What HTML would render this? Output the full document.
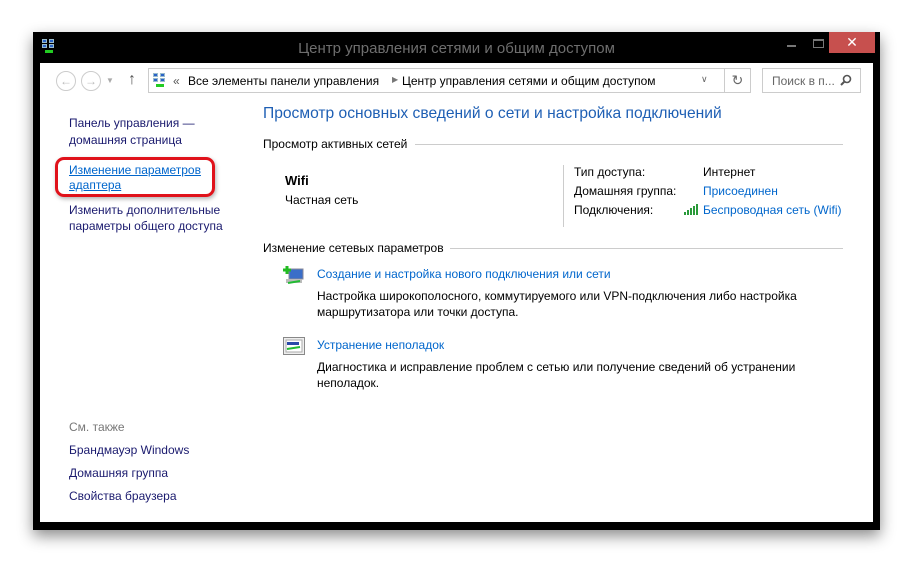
<!DOCTYPE html>
<html><head><meta charset="utf-8"><style>
*{margin:0;padding:0;box-sizing:border-box}
body{width:913px;height:563px;background:#fff;position:relative;overflow:hidden;font-family:"Liberation Sans","DejaVu Sans",sans-serif;font-size:12px;color:#000}
.win{position:absolute;left:33px;top:32px;width:847px;height:498px;background:#000;box-shadow:0 6px 14px rgba(0,0,0,.45)}
.title{position:absolute;left:0;right:0;top:8px;text-align:center;color:#6e6e6e;font-size:15px}
.client{position:absolute;left:7px;top:31px;width:833px;height:459px;background:#fff}
.a{position:absolute;white-space:nowrap}
.link{color:#0066cc}
.hdr{color:#1e5fb4;font-size:15.6px}
.nav{color:#1a1a6e}
.line{position:absolute;height:1px;background:#ccc}
.box{position:absolute;border:1px solid #ccc;background:#fff}
.netico{position:absolute;width:14px;height:14px}
.netico i{position:absolute;width:5px;height:4px;background:#2a63c8;border:1px solid #9bc}
</style></head><body>
<div class="win">
  <div class="netico" style="left:9px;top:7px">
    <i style="left:0;top:0"></i><i style="left:7px;top:0"></i><i style="left:0;top:5px"></i><i style="left:7px;top:5px"></i>
    <div style="position:absolute;left:3px;top:11px;width:8px;height:3px;background:#2c2"></div>
  </div>
  <div class="title">Центр управления сетями и общим доступом</div>
  <div class="a" style="left:754px;top:13px;width:9px;height:2px;background:#777"></div>
  <div class="a" style="left:780px;top:7px;width:11px;height:9px;border:1px solid #777;border-top-width:2px"></div>
  <div class="a" style="left:796px;top:0;width:46px;height:21px;background:#c7504e;color:#fff;text-align:center;font-size:14px;line-height:21px;font-weight:bold">✕</div>
  <div class="client">
    <div class="a" style="left:16px;top:8px;width:20px;height:20px;border:1px solid #ccc;border-radius:50%;color:#bbb;text-align:center;line-height:18px">←</div>
    <div class="a" style="left:41px;top:8px;width:20px;height:20px;border:1px solid #ccc;border-radius:50%;color:#bbb;text-align:center;line-height:18px">→</div>
    <div class="a" style="left:66px;top:13px;color:#aaa;font-size:8px">▼</div>
    <div class="a" style="left:88px;top:8px;color:#555;font-size:16px;font-weight:bold">↑</div>
    <div class="box" style="left:108px;top:5px;width:603px;height:25px"></div>
    <div class="box" style="left:684px;top:5px;width:27px;height:25px;text-align:center;color:#666;font-size:14px;line-height:22px">↻</div>
    <div class="a" style="left:661px;top:11px;color:#666;font-size:9px">∨</div>
    <div class="netico" style="left:113px;top:10px">
      <i style="left:0;top:0"></i><i style="left:7px;top:0"></i><i style="left:0;top:5px"></i><i style="left:7px;top:5px"></i>
      <div style="position:absolute;left:3px;top:11px;width:8px;height:3px;background:#2c2"></div>
    </div>
    <div class="a" style="left:133px;top:11px;color:#555">«</div>
    <div class="a" style="left:148px;top:11px">Все элементы панели управления</div>
    <div class="a" style="left:352px;top:12px;color:#777;font-size:8px">▶</div>
    <div class="a" style="left:362px;top:11px">Центр управления сетями и общим доступом</div>
    <div class="box" style="left:722px;top:5px;width:99px;height:25px"></div>
    <div class="a" style="left:732px;top:11px;color:#666">Поиск в п...</div>
    <svg class="a" style="left:800px;top:11px" width="12" height="12"><circle cx="7" cy="5" r="3.5" fill="none" stroke="#555" stroke-width="1.6"/><line x1="4.5" y1="7.5" x2="1" y2="11" stroke="#555" stroke-width="2"/></svg>

    <div class="a nav" style="left:29px;top:52px;line-height:17px">Панель управления —<br>домашняя страница</div>
    <div class="a" style="left:15px;top:94px;width:160px;height:40px;border:3px solid #e0121b;border-radius:9px;box-shadow:1px 2px 4px rgba(0,0,0,.3)"></div>
    <div class="a link" style="left:29px;top:100px;line-height:15px;text-decoration:underline">Изменение параметров<br>адаптера</div>
    <div class="a nav" style="left:29px;top:139px;line-height:16px">Изменить дополнительные<br>параметры общего доступа</div>
    <div class="a" style="left:29px;top:357px;color:#777">См. также</div>
    <div class="a nav" style="left:29px;top:380px">Брандмауэр Windows</div>
    <div class="a nav" style="left:29px;top:403px">Домашняя группа</div>
    <div class="a nav" style="left:29px;top:426px">Свойства браузера</div>

    <div class="a hdr" style="left:223px;top:42px">Просмотр основных сведений о сети и настройка подключений</div>
    <div class="a" style="left:223px;top:74px">Просмотр активных сетей</div>
    <div class="line" style="left:375px;top:81px;width:428px"></div>
    <div class="a" style="left:245px;top:110px;font-weight:bold;font-size:13px">Wifi</div>
    <div class="a" style="left:245px;top:130px">Частная сеть</div>
    <div class="a" style="left:523px;top:102px;width:1px;height:62px;background:#ccc"></div>
    <div class="a" style="left:534px;top:102px">Тип доступа:</div>
    <div class="a" style="left:663px;top:102px">Интернет</div>
    <div class="a" style="left:534px;top:121px">Домашняя группа:</div>
    <div class="a link" style="left:663px;top:121px">Присоединен</div>
    <div class="a" style="left:534px;top:140px">Подключения:</div>
    <svg class="a" style="left:644px;top:140px" width="16" height="12"><g fill="#2a9a3a"><rect x="0" y="9" width="2" height="3"/><rect x="3" y="7" width="2" height="5"/><rect x="6" y="5" width="2" height="7"/><rect x="9" y="3" width="2" height="9"/><rect x="12" y="1" width="2" height="11"/></g></svg>
    <div class="a link" style="left:663px;top:140px">Беспроводная сеть (Wifi)</div>

    <div class="a" style="left:223px;top:178px">Изменение сетевых параметров</div>
    <div class="line" style="left:410px;top:185px;width:393px"></div>

    <svg class="a" style="left:243px;top:203px" width="22" height="20">
      <rect x="6" y="3" width="14" height="10" fill="#3a6ec8" stroke="#889"/>
      <rect x="3" y="13" width="16" height="4" fill="#bbb"/>
      <line x1="5" y1="17" x2="17" y2="15" stroke="#2b3" stroke-width="2"/>
      <path d="M4 0v8M0 4h8" stroke="#2b2" stroke-width="3"/>
    </svg>
    <div class="a link" style="left:277px;top:204px">Создание и настройка нового подключения или сети</div>
    <div class="a" style="left:277px;top:225px;line-height:16px">Настройка широкополосного, коммутируемого или VPN-подключения либо настройка<br>маршрутизатора или точки доступа.</div>

    <svg class="a" style="left:243px;top:274px" width="22" height="20">
      <rect x="0.5" y="0.5" width="21" height="17" fill="#eee" stroke="#888"/>
      <rect x="3" y="3" width="16" height="12" fill="#fff" stroke="#aaa"/>
      <rect x="4" y="5" width="12" height="3" fill="#2a4aa8"/>
      <line x1="4" y1="12" x2="17" y2="10" stroke="#2b3" stroke-width="2"/>
    </svg>
    <div class="a link" style="left:277px;top:275px">Устранение неполадок</div>
    <div class="a" style="left:277px;top:296px;line-height:16px">Диагностика и исправление проблем с сетью или получение сведений об устранении<br>неполадок.</div>
  </div>
</div>
</body></html>
